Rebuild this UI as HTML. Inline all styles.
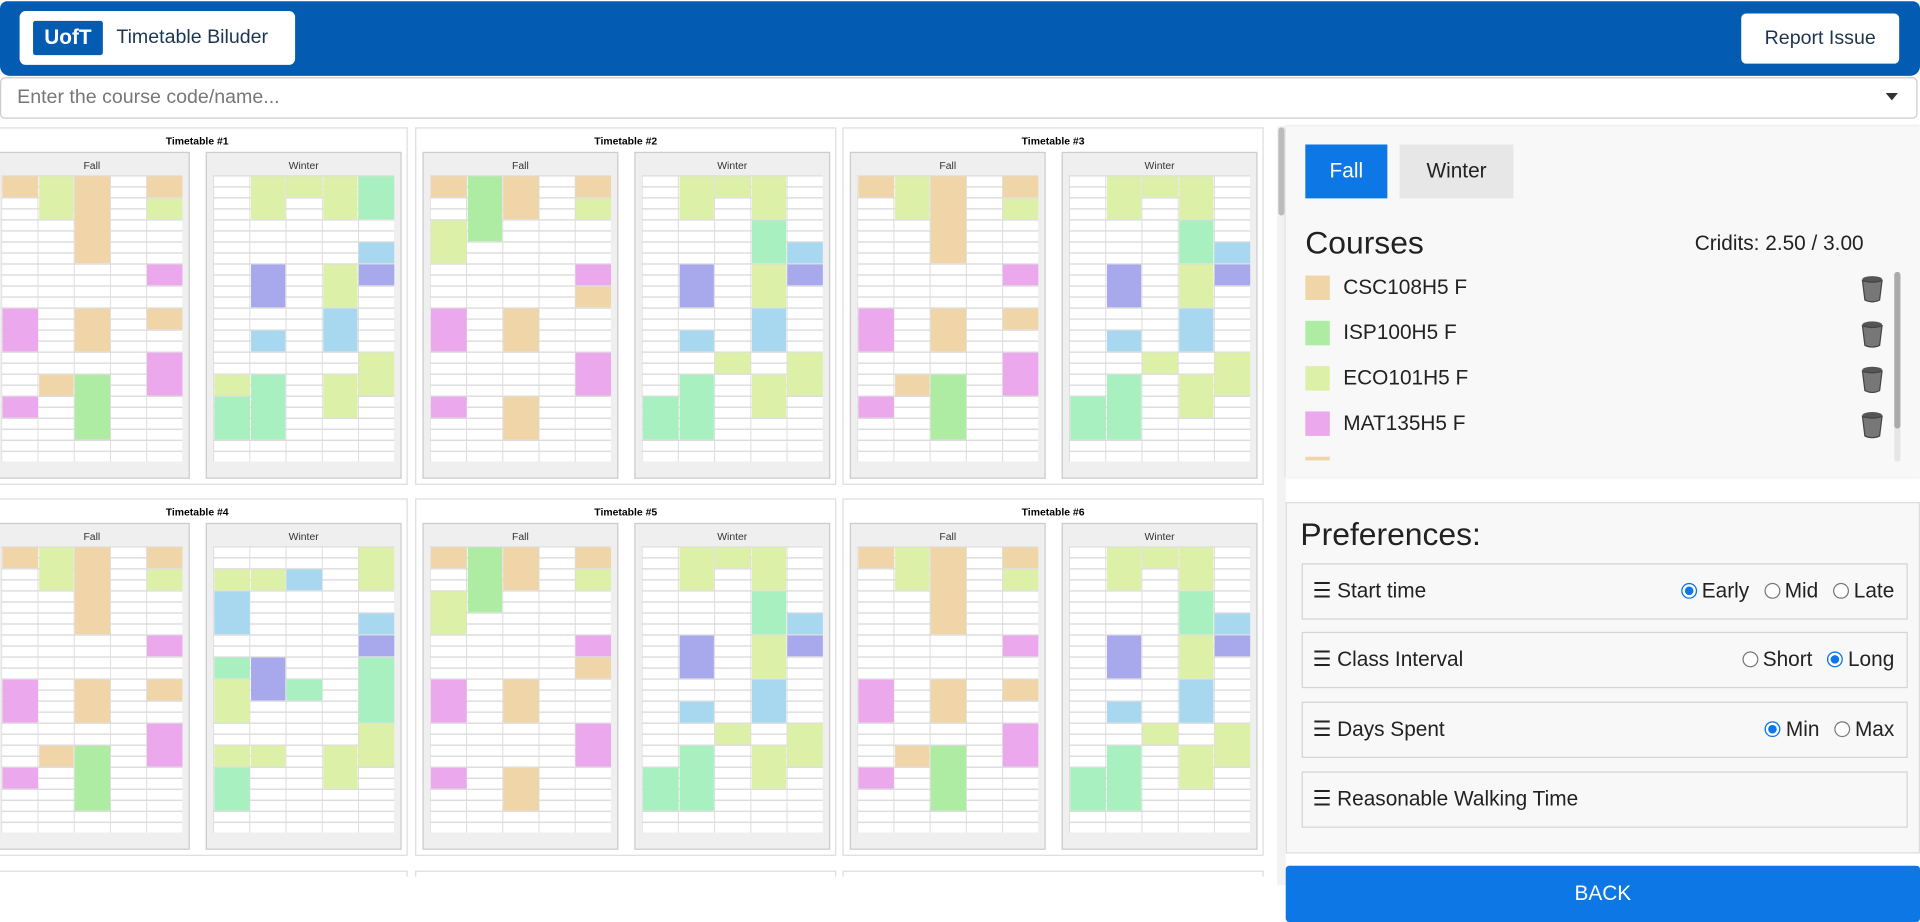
<!DOCTYPE html>
<html><head><meta charset="utf-8"><style>
*{box-sizing:border-box;margin:0;padding:0}
html,body{width:1920px;height:922px;overflow:hidden;background:#fff;font-family:"Liberation Sans",sans-serif}
#root{position:absolute;left:0;top:0;width:1568px;height:753px;transform:scale(1.22449);transform-origin:0 0;overflow:hidden}
.abs{position:absolute}
.hdr{left:0;top:1px;width:1568px;height:61px;background:#045bb2;border-radius:6px 6px 8px 8px}
.brand{left:16px;top:9px;width:225px;height:44px;background:#fff;border-radius:5px}
.uoft{left:11px;top:8px;width:57px;height:28px;background:#045bb2;color:#fff;font-weight:bold;font-size:17px;line-height:28px;text-align:center;border-radius:2px}
.bt{left:79px;top:0;line-height:44px;font-size:16px;color:#1d3550}
.rep{left:1422px;top:11px;width:129px;height:41px;background:#fff;border-radius:4px;font-size:16px;line-height:41px;text-align:center;color:#1d3550}
.search{left:0;top:63px;width:1566px;height:34px;border:1px solid #ccc;border-radius:4px;background:#fff;font-size:16px;color:#777;line-height:32px;padding-left:13px}
.card{width:344px;height:292px;border:1px solid #ddd;background:#fff}
.card .t{position:absolute;top:5px;left:0;width:100%;text-align:center;font-size:8.5px;font-weight:bold}
.pan{position:absolute;top:19px;width:160px;height:267px;background:#efefef;border:1px solid #ccc}
.pan .h{position:absolute;top:5px;width:100%;text-align:center;font-size:8.5px;color:#333}
.grid{position:absolute;left:5px;top:18px;width:148px;height:234px;background:#fff;
background-image:linear-gradient(#ddd 1px,transparent 1px),linear-gradient(90deg,#ddd 1px,transparent 1px);background-size:100% 9px,29.6px 100%}
.b{position:absolute}
.rp{left:1050px;top:103px;width:518px;height:287px;background:#f8f8f8;box-shadow:0 0 2px #ccc}
.fb{left:16px;top:15px;width:67px;height:44px;background:#0d77e6;color:#fff;font-size:17px;line-height:44px;text-align:center}
.wb{left:93px;top:15px;width:93px;height:44px;background:#e7e7e7;color:#222;font-size:17px;line-height:44px;text-align:center}
.cr{font-size:17px;color:#222}
.sw{width:20px;height:20px}
.pp{left:1050px;top:410px;width:518px;height:287px;background:#f8f8f8;border:1px solid #ddd}
.row{left:12px;width:495px;height:46px;border:1px solid #d4d4d4;background:#f8f8f8;font-size:17px;color:#222;line-height:44px;padding-left:8px}
.opts{position:absolute;right:10px;top:0}
.rd{display:inline-block;width:13px;height:13px;border:1px solid #777;border-radius:50%;vertical-align:middle;margin:0 4px 3px 12px;background:#fff}
.rd.on{border:1px solid #0d77e6;box-shadow:inset 0 0 0 2px #fff;background:#0d77e6}
.back{left:1050px;top:707px;width:518px;height:46px;background:#0d77e6;color:#fff;font-size:17px;line-height:46px;text-align:center;border-radius:3px}
</style></head><body><div id="root">
<div class="abs hdr"></div>
<div class="abs brand"><div class="abs uoft">UofT</div><div class="abs bt">Timetable Biluder</div></div>
<div class="abs rep">Report Issue</div>
<div class="abs search">Enter the course code/name...</div>
<svg class="abs" style="left:1540px;top:76px" width="10" height="6"><path d="M0 0H10L5 6Z" fill="#333"/></svg>
<div class="abs" style="left:0;top:0;width:1043px;height:716px;overflow:hidden"><div id="cards"></div></div>
<div class="abs" style="left:1043px;top:103px;width:7px;height:620px;background:#f2f2f2"></div>
<div class="abs" style="left:1044px;top:104px;width:5px;height:72px;background:#bbb;border-radius:3px"></div>
<div class="abs rp">
<div class="abs fb">Fall</div><div class="abs wb">Winter</div>
<div class="abs" style="left:16px;top:80px;font-size:26px;color:#222">Courses</div>
<div class="abs" style="left:334px;top:86px;font-size:17px;color:#222">Cridits: 2.50 / 3.00</div>
<div class="abs" style="left:0;top:118px;width:496px;height:155px;overflow:hidden">
<div class="abs sw" style="left:16px;top:4px;background:#f0d5a8"></div><div class="abs cr" style="left:47px;top:4px">CSC108H5 F</div>
<div class="abs sw" style="left:16px;top:41px;background:#aeeca4"></div><div class="abs cr" style="left:47px;top:41px">ISP100H5 F</div>
<div class="abs sw" style="left:16px;top:78px;background:#dcf0a8"></div><div class="abs cr" style="left:47px;top:78px">ECO101H5 F</div>
<div class="abs sw" style="left:16px;top:115px;background:#eca8ec"></div><div class="abs cr" style="left:47px;top:115px">MAT135H5 F</div>
<div class="abs sw" style="left:16px;top:152px;background:#f0d5a8"></div>
</div>
<div id="cans"></div>
<div class="abs" style="left:497px;top:119px;width:5px;height:155px;background:#e6e6e6;border-radius:3px"></div>
<div class="abs" style="left:497px;top:119px;width:5px;height:128px;background:#aaa;border-radius:3px"></div>
</div>
<div class="abs pp">
<div class="abs" style="left:11px;top:10px;font-size:26px;color:#222">Preferences:</div>
<div class="abs row" style="top:49px">☰ Start time<span class="opts"><span class="rd on"></span>Early<span class="rd"></span>Mid<span class="rd"></span>Late</span></div>
<div class="abs row" style="top:105px">☰ Class Interval<span class="opts"><span class="rd"></span>Short<span class="rd on"></span>Long</span></div>
<div class="abs row" style="top:162px">☰ Days Spent<span class="opts"><span class="rd on"></span>Min<span class="rd"></span>Max</span></div>
<div class="abs row" style="top:219px">☰ Reasonable Walking Time</div>
</div>
<div class="abs back">BACK</div>
</div>
<script>
var O="#f0d5a8",Y="#dcf0a8",G="#aeeca4",M="#a8f0c0",P="#eca8ec",U="#a8a8ec",B="#a8d8f0";
var F1=[[0,0,2,O],[0,12,4,P],[0,20,2,P],[1,0,4,Y],[1,18,2,O],[2,0,8,O],[2,12,4,O],[2,18,6,G],[4,0,2,O],[4,2,2,Y],[4,8,2,P],[4,12,2,O],[4,16,4,P]];
var F2=[[0,0,2,O],[0,4,4,Y],[0,12,4,P],[0,20,2,P],[1,0,6,G],[2,0,4,O],[2,12,4,O],[2,20,4,O],[4,0,2,O],[4,2,2,Y],[4,8,2,P],[4,10,2,O],[4,16,4,P]];
var W1=[[0,18,2,Y],[0,20,4,M],[1,0,4,Y],[1,8,4,U],[1,14,2,B],[1,18,6,M],[2,0,2,Y],[3,0,4,Y],[3,8,4,Y],[3,12,4,B],[3,18,4,Y],[4,0,4,M],[4,6,2,B],[4,8,2,U],[4,16,4,Y]];
var W2=[[0,20,4,M],[1,0,4,Y],[1,8,4,U],[1,14,2,B],[1,18,6,M],[2,0,2,Y],[2,16,2,Y],[3,0,4,Y],[3,4,4,M],[3,8,4,Y],[3,12,4,B],[3,18,4,Y],[4,6,2,B],[4,8,2,U],[4,16,4,Y]];
var W3=[[0,2,2,Y],[0,4,4,B],[0,10,2,M],[0,12,4,Y],[0,18,2,Y],[0,20,4,M],[1,2,2,Y],[1,10,4,U],[1,18,2,Y],[2,2,2,B],[2,12,2,M],[3,18,4,Y],[4,0,4,Y],[4,6,2,B],[4,8,2,U],[4,10,6,M],[4,16,4,Y]];
function grid(bl){var s='<div class="grid">';bl.forEach(function(b){s+='<div class="b" style="left:'+(b[0]*29.6+1)+'px;top:'+(b[1]*9+1)+'px;width:28.6px;height:'+(b[2]*9-1)+'px;background:'+b[3]+'"></div>'});return s+'</div>';}
var xs=[-11,339,688],ys=[104,407,711],h='';
var fp=[F1,F2,F1,F1,F2,F1],wp=[W1,W2,W2,W3,W2,W2];
for(var r=0;r<3;r++)for(var c=0;c<3;c++){var i=r*3+c;h+='<div class="abs card" style="left:'+xs[c]+'px;top:'+ys[r]+'px"><div class="t">Timetable #'+(i+1)+'</div><div class="pan" style="left:5px"><div class="h">Fall</div>'+grid(fp[i%6])+'</div><div class="pan" style="left:178px"><div class="h">Winter</div>'+grid(wp[i%6])+'</div></div>';}
document.getElementById('cards').innerHTML=h;
var t='';for(var k=0;k<4;k++){t+='<svg class="abs" style="left:470px;top:'+(122+k*37)+'px" width="18" height="22" viewBox="0 0 18 22"><ellipse cx="9" cy="3" rx="8" ry="2.5" fill="#555"/><path d="M1 4L3 20Q9 23 15 20L17 4Q9 7 1 4Z" fill="#777" stroke="#444"/></svg>';}
document.getElementById('cans').innerHTML=t;
</script>
</body></html>
